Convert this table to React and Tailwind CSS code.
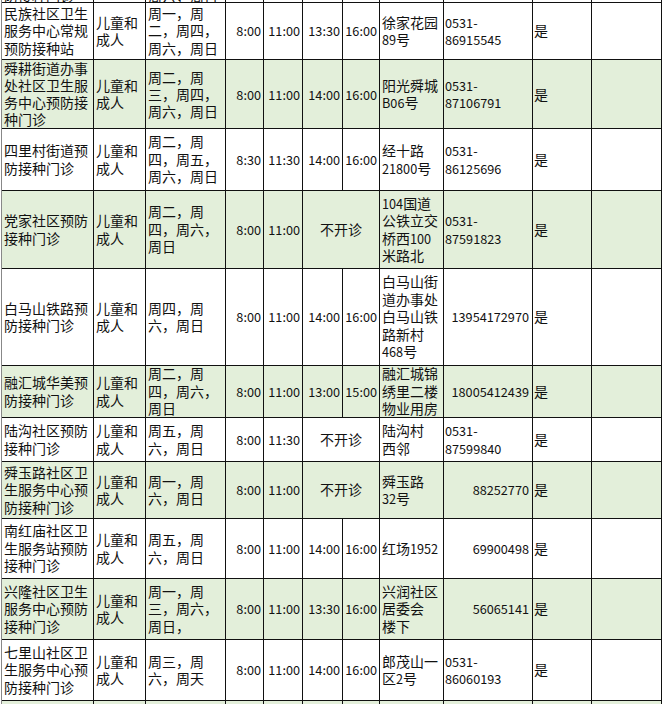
import React from 'react';

// column template shared by every row (widths include the 1px right border)
const grid = 'grid grid-cols-[92px_52px_80px_38px_39px_40px_37px_64px_89px_59px_70px]';

const rows = [
  { h: 'h-[57px]', green: false, name: ['民族社区卫生', '服务中心常规', '预防接种站'], days: ['周一，周', '二，周四，', '周六，周日'], t: ['8:00', '11:00', '13:30', '16:00'], addr: ['徐家花园', '89号'], phone: ['0531-', '86915545'] },
  { h: 'h-[69px] leading-[17px]', green: true, name: ['舜耕街道办事', '处社区卫生服', '务中心预防接', '种门诊'], days: ['周二，周', '三，周四，', '周六，周日'], t: ['8:00', '11:00', '14:00', '16:00'], addr: ['阳光舜城', 'B06号'], phone: ['0531-', '87106791'] },
  { h: 'h-[62px]', green: false, name: ['四里村街道预', '防接种门诊'], days: ['周二，周', '四，周五，', '周六，周日'], t: ['8:30', '11:30', '14:00', '16:00'], addr: ['经十路', '21800号'], phone: ['0531-', '86125696'] },
  { h: 'h-[78px]', green: true, name: ['党家社区预防', '接种门诊'], days: ['周二，周', '四，周六，', '周日'], t: ['8:00', '11:00'], addr: ['104国道', '公铁立交', '桥西100', '米路北'], phone: ['0531-', '87591823'] },
  { h: 'h-[97px]', green: false, name: ['白马山铁路预', '防接种门诊'], days: ['周四，周', '六，周日'], t: ['8:00', '11:00', '14:00', '16:00'], addr: ['白马山街', '道办事处', '白马山铁', '路新村', '468号'], phoneR: '13954172970' },
  { h: 'h-[52px]', green: true, name: ['融汇城华美预', '防接种门诊'], days: ['周二，周', '四，周六，', '周日'], t: ['8:00', '11:00', '13:00', '15:00'], addr: ['融汇城锦', '绣里二楼', '物业用房'], phoneR: '18005412439' },
  { h: 'h-[44px]', green: false, name: ['陆沟社区预防', '接种门诊'], days: ['周五，周', '六，周日'], t: ['8:00', '11:30'], addr: ['陆沟村', '西邻'], phone: ['0531-', '87599840'] },
  { h: 'h-[57px]', green: true, name: ['舜玉路社区卫', '生服务中心预', '防接种门诊'], days: ['周一，周', '六，周日'], t: ['8:00', '11:00'], addr: ['舜玉路', '32号'], phoneR: '88252770' },
  { h: 'h-[60px]', green: false, name: ['南红庙社区卫', '生服务站预防', '接种门诊'], days: ['周五，周', '六，周日'], t: ['8:00', '11:00', '14:00', '16:00'], addr: ['红场1952'], phoneR: '69900498' },
  { h: 'h-[61px]', green: true, name: ['兴隆社区卫生', '服务中心预防', '接种门诊'], days: ['周一，周', '三，周六，', '周日，'], t: ['8:00', '11:00', '13:30', '16:00'], addr: ['兴润社区', '居委会', '楼下'], phoneR: '56065141' },
  { h: 'h-[61px]', green: false, name: ['七里山社区卫', '生服务中心预', '防接种门诊'], days: ['周三，周', '六，周天'], t: ['8:00', '11:00', '14:00', '16:00'], addr: ['郎茂山一', '区2号'], phone: ['0531-', '86060193'] },
];

// latin runs are set a little smaller so digits come out ~7px wide like the sheet
function Txt({ s }) {
  return s.split(/([\x00-\x7f]+)/).filter(Boolean).map((p, i) =>
    /^[\x00-\x7f]+$/.test(p) ? <span key={i} className="text-[12.7px]">{p}</span> : <span key={i}>{p}</span>
  );
}

function Lines({ lines }) {
  return (
    <div>
      {lines.map((l, i) => <div key={i} className="whitespace-nowrap"><Txt s={l} /></div>)}
    </div>
  );
}

const cell = 'flex items-center overflow-hidden border-r border-b border-[#111]';

function Row({ r }) {
  return (
    <div className={`${grid} ${r.h} ${r.green ? 'bg-[#e3efda]' : 'bg-white'}`}>
      <div className={`${cell} pl-[2px]`}><Lines lines={r.name} /></div>
      <div className={`${cell} pl-[2px]`}><Lines lines={['儿童和', '成人']} /></div>
      <div className={`${cell} pl-[2px]`}><Lines lines={r.days} /></div>
      {r.t.map((t, i) => (
        <div key={i} className={`${cell} justify-end pr-[2px]`}><Txt s={t} /></div>
      ))}
      {r.t.length === 2 && <div className={`${cell} col-span-2 justify-center`}>不开诊</div>}
      <div className={`${cell} pl-[2px]`}><Lines lines={r.addr} /></div>
      {r.phone
        ? <div className={`${cell} pl-[1px]`}><Lines lines={r.phone} /></div>
        : <div className={`${cell} justify-end pr-[3px]`}><Txt s={r.phoneR} /></div>}
      <div className={`${cell} pl-[1px]`}>是</div>
      <div className={cell} />
    </div>
  );
}

export default function App() {
  return (
    <div className="w-[662px] h-[704px] overflow-hidden bg-white pl-[1px] text-[14px] leading-[17.5px] text-[#111] font-['Noto_Sans_CJK_SC','Noto_Sans',sans-serif]">
      <div className="border-l border-[#888]">
        {/* tail of the row above, cut off by the screenshot */}
        <div className={`${grid} h-[3px] bg-white`}>
          <div className="flex items-end overflow-hidden border-r border-b border-[#111] pl-[2px] leading-[11px]">防接种门诊</div>
          <div className="border-r border-b border-[#111]" />
          <div className="flex items-end overflow-hidden border-r border-b border-[#111] pl-[2px] leading-[11px]">周六，周日</div>
          <div className="border-r border-b border-[#111]" />
          <div className="border-r border-b border-[#111]" />
          <div className="border-r border-b border-[#111]" />
          <div className="border-r border-b border-[#111]" />
          <div className="border-r border-b border-[#111]" />
          <div className="border-r border-b border-[#111]" />
          <div className="border-r border-b border-[#111]" />
          <div className="border-r border-b border-[#111]" />
        </div>
        {rows.map((r, i) => <Row key={i} r={r} />)}
        {/* start of the next row */}
        <div className={`${grid} h-[12px] bg-[#e3efda]`}>
          {Array.from({ length: 11 }).map((_, i) => <div key={i} className="border-r border-[#111]" />)}
        </div>
      </div>
    </div>
  );
}
